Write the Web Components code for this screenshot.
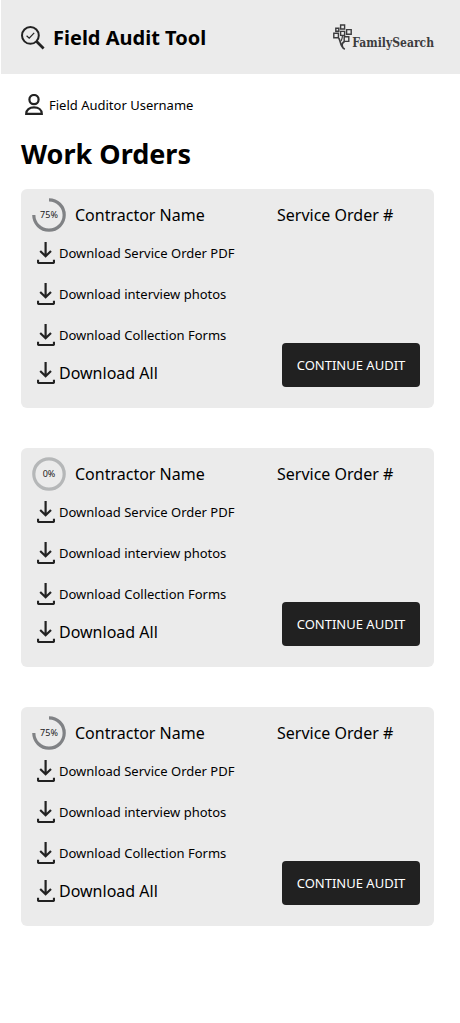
<!DOCTYPE html>
<html lang="en">
<head>
<meta charset="utf-8">
<meta name="viewport" content="width=device-width, initial-scale=1">
<title>Field Audit Tool</title>
<style>
  body { margin: 0; background: #fff; color: #000; font-family: "Noto Sans", sans-serif; }
</style>
</head>
<body>
<audit-app></audit-app>

<template id="t-app">
  <style>
    :host { display: block; }
    main { padding: 16px 26px 40px 21px; }
    h1 { margin: 15px 0 16px; font-size: 27px; line-height: 38px; font-weight: 700; }
    .orders { display: grid; gap: 40px; }
  </style>
  <app-header>Field Audit Tool</app-header>
  <main>
    <user-label>Field Auditor Username</user-label>
    <h1>Work Orders</h1>
    <div class="orders">
      <work-order progress="75"><span slot="name">Contractor Name</span><span slot="number">Service Order #</span></work-order>
      <work-order progress="0"><span slot="name">Contractor Name</span><span slot="number">Service Order #</span></work-order>
      <work-order progress="75"><span slot="name">Contractor Name</span><span slot="number">Service Order #</span></work-order>
    </div>
  </main>
</template>

<template id="t-header">
  <style>
    :host { display: block; margin-left: 1px; background: #ebebeb; }
    header { display: flex; align-items: center; justify-content: space-between; height: 74px; padding: 0 26px 0 20px; }
    .brand { display: flex; align-items: center; gap: 8px; font-size: 20px; line-height: 28px; font-weight: 700; padding-top: 2px; }
    svg { display: block; }
  </style>
  <header>
    <div class="brand">
      <svg width="24" height="24" viewBox="0 0 24 24" fill="none" stroke="#222" aria-hidden="true">
        <circle cx="9.4" cy="9.4" r="8.4" stroke-width="2"/>
        <path d="M15.6 15.6 22.6 22.4" stroke-width="2.8"/>
        <path d="M5.6 9.8 8.2 12.2 13.2 6.8" stroke-width="1.2"/>
      </svg>
      <span><slot></slot></span>
    </div>
    <family-logo></family-logo>
  </header>
</template>

<template id="t-logo">
  <style>
    :host { display: flex; align-items: center; color: #3c3c3e; }
    svg { display: block; }
    span { font: 700 12px/18px "DejaVu Serif Condensed", "DejaVu Serif", serif; padding-top: 12px; }
  </style>
  <svg width="19" height="26" viewBox="0 0 19 26" fill="none" stroke="currentColor" aria-hidden="true">
    <g stroke-width="1.4">
      <path d="M7.6 1h4v4h-4zM2.8 4.2h3v3h-3zM.8 9.2h4.6v4.6H.8zM7.6 7.4h4v4h-4zM13.6 5.6h4.6v4.6h-4.6zM11.2 12.8h4.6v4.6h-4.6z"/>
    </g>
    <path d="M9.4 11.6C9.6 14 8.8 15.4 8 17" stroke-width="1.2"/>
    <path d="M5.4 14C7.8 15 6.4 22.4 11.8 25.2M11.6 17.4C9 18.6 8.4 21.4 10 24" stroke-width="1.7"/>
  </svg>
  <span>FamilySearch</span>
</template>

<template id="t-user">
  <style>
    :host { display: flex; align-items: center; gap: 5px; height: 30px; padding-left: 4px; font-size: 13px; line-height: 18px; }
    svg { display: block; flex: none; }
  </style>
  <svg width="19" height="22" viewBox="0 0 19 22" fill="none" stroke="#222" stroke-width="2.2" aria-hidden="true">
    <circle cx="9" cy="5.6" r="4.6"/>
    <path d="M1.2 19.8C1.2 15.8 4.4 13.4 9 13.4S16.8 15.8 16.8 19.8Z"/>
  </svg>
  <span><slot></slot></span>
</template>

<template id="t-ring">
  <style>
    :host { display: block; }
    svg { display: block; overflow: visible; }
    text { font: 9px "Noto Sans", sans-serif; fill: #222; text-anchor: middle; }
    circle { fill: none; stroke-width: 3.2; }
  </style>
  <svg width="34" height="34" viewBox="0 0 34 34" role="img">
    <circle cx="17" cy="17" r="15.2"/>
    <text x="17" y="20"></text>
  </svg>
</template>

<template id="t-download">
  <style>
    :host { display: block; font-size: 13px; }
    :host([large]) { font-size: 16px; }
    a { display: flex; align-items: center; gap: 4px; height: 41px; color: inherit; text-decoration: none; line-height: 20px; }
    :host([large]) a { height: 36px; }
    svg { display: block; flex: none; }
  </style>
  <a href="#">
    <svg width="18" height="22" viewBox="0 0 18 22" fill="none" stroke="#222" stroke-width="2.2" aria-hidden="true">
      <path d="M8.6 0V14M3.2 9 8.6 14.2 14 9"/>
      <path d="M1 17.8V19.8Q1 21 2.2 21H15.8Q17 21 17 19.8V17.8"/>
    </svg>
    <span><slot></slot></span>
  </a>
</template>

<template id="t-order">
  <style>
    :host { display: block; }
    article { background: #ebebeb; border-radius: 6px; padding: 8px 14px 17px 11px; }
    .top { display: flex; align-items: center; height: 35px; font-size: 16px; line-height: 22px; }
    progress-ring { margin-right: 9px; }
    .name { flex: 1; }
    .number { width: 143px; }
    .body { display: flex; justify-content: space-between; align-items: flex-end; }
    .files { padding-left: 5px; }
    button { width: 138px; height: 44px; margin: 0 0 4px; padding: 0; border: 0; border-radius: 4px; background: #212121; color: #fff; font: 13px/20px "Noto Sans", sans-serif; cursor: pointer; }
  </style>
  <article>
    <div class="top">
      <progress-ring></progress-ring>
      <div class="name"><slot name="name"></slot></div>
      <div class="number"><slot name="number"></slot></div>
    </div>
    <div class="body">
      <div class="files">
        <download-link>Download Service Order PDF</download-link>
        <download-link>Download interview photos</download-link>
        <download-link>Download Collection Forms</download-link>
        <download-link large>Download All</download-link>
      </div>
      <button type="button">CONTINUE AUDIT</button>
    </div>
  </article>
</template>

<script>
  class TemplateElement extends HTMLElement {
    constructor() {
      super();
      const template = document.getElementById(this.constructor.template);
      this.attachShadow({ mode: "open" }).append(document.importNode(template.content, true));
    }
  }

  class ProgressRing extends TemplateElement {
    static template = "t-ring";
    static observedAttributes = ["value"];
    attributeChangedCallback() {
      const value = Number(this.getAttribute("value")) || 0;
      const circle = this.shadowRoot.querySelector("circle");
      circle.setAttribute("pathLength", "100");
      circle.setAttribute("transform", "rotate(-90 17 17)");
      circle.setAttribute("stroke", value ? "#808285" : "#b5b7b8");
      if (value) circle.setAttribute("stroke-dasharray", `${value} 100`);
      else circle.removeAttribute("stroke-dasharray");
      this.shadowRoot.querySelector("text").textContent = `${value}%`;
    }
  }

  class WorkOrder extends TemplateElement {
    static template = "t-order";
    static observedAttributes = ["progress"];
    attributeChangedCallback(name, previous, value) {
      this.shadowRoot.querySelector("progress-ring").setAttribute("value", value);
    }
  }

  customElements.define("progress-ring", ProgressRing);
  customElements.define("download-link", class extends TemplateElement { static template = "t-download"; });
  customElements.define("work-order", WorkOrder);
  customElements.define("user-label", class extends TemplateElement { static template = "t-user"; });
  customElements.define("family-logo", class extends TemplateElement { static template = "t-logo"; });
  customElements.define("app-header", class extends TemplateElement { static template = "t-header"; });
  customElements.define("audit-app", class extends TemplateElement { static template = "t-app"; });
</script>
</body>
</html>
